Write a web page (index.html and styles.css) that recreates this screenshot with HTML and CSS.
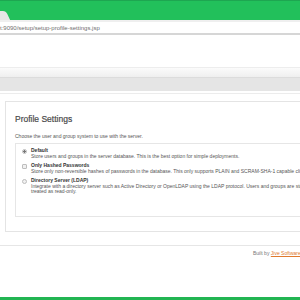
FILE: index.html
```html
<!DOCTYPE html>
<html lang="en">
<head>
  <meta charset="UTF-8" />
  <title>Openfire Setup</title>
  <link rel="stylesheet" href="styles.css">
</head>
<body>

<div class="chrome">
  <div class="tab"></div>
</div>
<div class="urlbar">
  <span class="url">t:9090/setup/setup-profile-settings.jsp</span>
</div>

<div class="page">
  <div class="header">
    <div class="header-top"></div>
    <div class="header-band"></div>
  </div>

  <div class="panel">
    <h1>Profile Settings</h1>
    <p class="intro">Choose the user and group system to use with the server.</p>

    <div class="options">
      <div class="option">
        <span class="radio checked"></span>
        <div class="option-text">
          <b>Default</b>
          <span>Store users and groups in the server database. This is the best option for simple deployments.</span>
        </div>
      </div>
      <div class="option">
        <span class="check"></span>
        <div class="option-text">
          <b>Only Hashed Passwords</b>
          <span>Store only non-reversible hashes of passwords in the database. This only supports PLAIN and SCRAM-SHA-1 capable clients.</span>
        </div>
      </div>
      <div class="option">
        <span class="radio"></span>
        <div class="option-text">
          <b>Directory Server (LDAP)</b>
          <span>Integrate with a directory server such as Active Directory or OpenLDAP using the LDAP protocol. Users and groups are stored in the directory and treated as read-only.</span>
        </div>
      </div>
    </div>
  </div>

  <div class="footer">
    Built by <a href="#">Jive Software</a> and the IgniteRealtime.org community
  </div>
</div>

<div class="bottom-bar"></div>

</body>
</html>
```

FILE: styles.css
```css
* {
  box-sizing: border-box;
}

body {
  margin: 0;
  width: 300px;
  height: 300px;
  overflow: hidden;
  background: #ffffff;
  font-family: 'Liberation Sans', Arial, sans-serif;
  color: #444;
  position: relative;
}

.chrome {
  height: 20px;
  background: #22c05b;
  border-top: 1px solid #1ea651;
  position: relative;
}

.tab {
  position: absolute;
  left: -6px;
  bottom: 0;
  width: 14px;
  height: 9px;
  background: #e6e6e6;
  border-radius: 0 3px 0 0;
  transform: skewX(25deg);
}

.urlbar {
  height: 15px;
  border-top: 2px solid #efefef;
  border-bottom: 2px solid #d6d6d6;
  background: #fff;
  display: flex;
  align-items: center;
  white-space: nowrap;
}

.url {
  font-size: 6px;
  color: #6f6f6f;
}

.page {
  width: 420px;
  padding-top: 32px;
}

.header {
  height: 27px;
  border-top: 1px solid #ededed;
  border-bottom: 1px solid #ececec;
}

.header-top {
  height: 10px;
  background: linear-gradient(#fbfbfb, #efefef);
  border-bottom: 1px solid #dcdcdc;
}

.header-band {
  height: 14px;
  background: #e5e5e5;
  border-bottom: 1px solid #fff;
}

.panel {
  margin: 7px 0 0 5px;
  border: 1px solid #e4e4e4;
  height: 131px;
  padding: 12px 0 0 9px;
}

h1 {
  margin: 0;
  font-size: 8.5px;
  font-weight: normal;
  color: #4a4a4a;
  -webkit-text-stroke: 0.2px #4a4a4a;
}

.intro {
  margin: 9px 0 0;
  font-size: 5px;
  color: #555;
}

.options {
  margin-top: 4px;
  border: 1px solid #e6e6e6;
  border-right: none;
  height: 74px;
  padding: 4px 0 0 6px;
  display: flex;
  flex-direction: column;
  gap: 4px;
}

.option {
  display: flex;
  gap: 4px;
  align-items: flex-start;
}

.option-text {
  font-size: 5px;
  line-height: 5.5px;
  color: #555;
  width: 330px;
}

.option-text b {
  display: block;
  color: #333;
}

.radio, .check {
  flex: none;
  width: 5px;
  height: 5px;
  margin-top: 1px;
  border: 1px solid #bdbdbd;
  background: #f0f0f0;
  border-radius: 50%;
}

.radio.checked {
  background: radial-gradient(circle, #777 0 1px, #eee 1.2px);
}

.check {
  border-radius: 1px;
}

.footer {
  margin-top: 13px;
  border-top: 1px solid #e6e6e6;
  padding: 4px 0 0 253px;
  font-size: 5px;
  color: #777;
  white-space: nowrap;
}

.footer a {
  color: #e07a2e;
}

.bottom-bar {
  position: absolute;
  left: 0;
  right: 0;
  bottom: 0;
  height: 3px;
  background: #22b552;
}
```
